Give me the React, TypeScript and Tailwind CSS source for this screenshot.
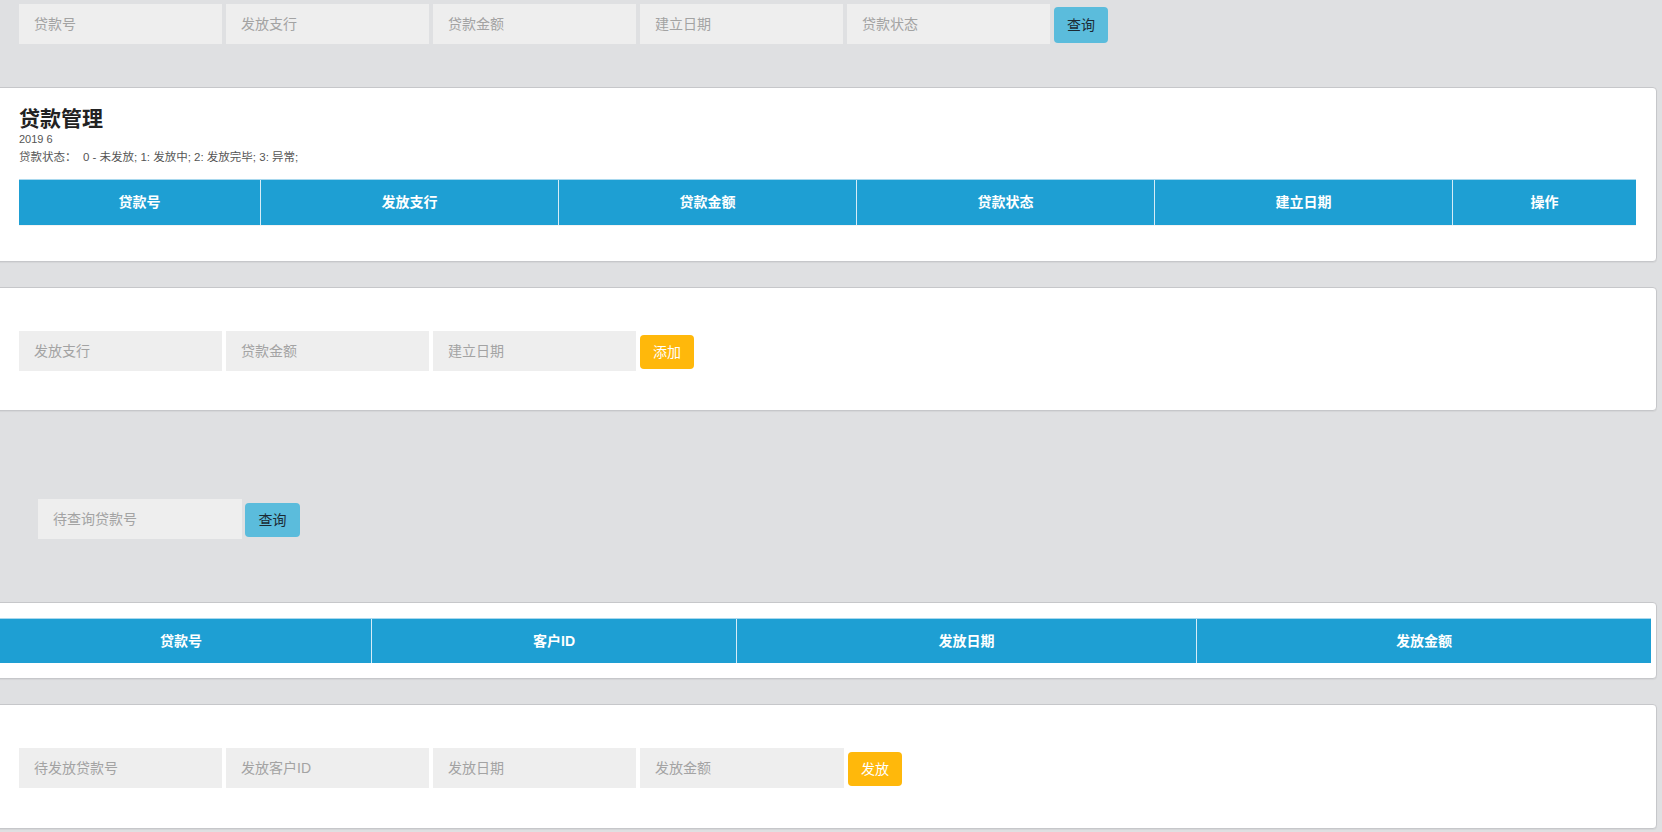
import React from "react";

const inputCls =
  "h-[40px] w-[203px] bg-[#eeeeee] px-[15px] text-[14px] text-[#333] placeholder:text-[#a3a3a3] outline-none";

const Field = ({ placeholder }: { placeholder: string }) => (
  <input placeholder={placeholder} className={inputCls} />
);

const loanCols = ["贷款号", "发放支行", "贷款金额", "贷款状态", "建立日期", "操作"];
const payCols = ["贷款号", "客户ID", "发放日期", "发放金额"];

const App = () => {
  return (
    <div className="w-full min-h-screen overflow-hidden bg-[#dfe0e2] pb-[4px] font-['Liberation_Sans','Noto_Sans_CJK_SC',sans-serif]">
      {/* top search */}
      <div className="flex items-start gap-[4px] pl-[19px] pt-[4px]">
        <Field placeholder="贷款号" />
        <Field placeholder="发放支行" />
        <Field placeholder="贷款金额" />
        <Field placeholder="建立日期" />
        <Field placeholder="贷款状态" />
        <button className="mt-[3px] h-[36px] w-[54px] rounded-[4px] bg-[#5bbcdc] text-[14px] text-[#1c2a33]">
          查询
        </button>
      </div>

      {/* loan list */}
      <div className="-ml-[10px] mr-[5px] mt-[43px] rounded-[4px] border border-[#c6c7ca] bg-white pl-[28px] pr-[20px] pt-[18px] pb-[35px] shadow-[0_1px_1px_rgba(0,0,0,0.05)]">
        <h2 className="text-[21px] leading-[26px] font-semibold text-[#222]">贷款管理</h2>
        <div className="text-[11px] leading-[15px] text-[#555]">2019 6</div>
        <div className="mt-[2px] text-[11.5px] leading-[16px] text-[#555]">
          贷款状态：&nbsp;&nbsp;0 - 未发放; 1: 发放中; 2: 发放完毕; 3: 异常;
        </div>
        <div className="mt-[14px] grid h-[46px] grid-cols-[241px_298px_298px_298px_298px_1fr] border-t border-[#a8d8ee] bg-[#1e9fd3]">
          {loanCols.map((c, i) => (
            <div
              key={c}
              className={`flex items-center justify-center text-[14px] font-bold text-white ${
                i > 0 ? "border-l border-[#d5ecf7]" : ""
              }`}
            >
              {c}
            </div>
          ))}
        </div>
        <div className="h-px bg-[#f3f3f3]" />
      </div>

      {/* add loan */}
      <div className="-ml-[10px] mr-[5px] mt-[25px] flex items-start gap-[4px] rounded-[4px] border border-[#c6c7ca] bg-white pl-[28px] pt-[43px] pb-[39px] shadow-[0_1px_1px_rgba(0,0,0,0.05)]">
        <Field placeholder="发放支行" />
        <Field placeholder="贷款金额" />
        <Field placeholder="建立日期" />
        <button className="mt-[4px] h-[34px] w-[54px] rounded-[4px] bg-[#ffb80b] text-[14px] text-white">
          添加
        </button>
      </div>

      {/* query payments */}
      <div className="mt-[88px] flex items-start gap-[3px] pl-[38px]">
        <input placeholder="待查询贷款号" className={inputCls + " w-[204px]"} />
        <button className="mt-[4px] h-[34px] w-[55px] rounded-[4px] bg-[#5bbcdc] text-[14px] text-[#1c2a33]">
          查询
        </button>
      </div>

      {/* payments list */}
      <div className="-ml-[10px] mr-[5px] mt-[63px] rounded-[4px] border border-[#c6c7ca] bg-white pr-[5px] pt-[15px] pb-[15px] shadow-[0_1px_1px_rgba(0,0,0,0.05)]">
        <div className="grid h-[45px] grid-cols-[380px_365px_460px_1fr] border-t border-[#a8d8ee] bg-[#1e9fd3]">
          {payCols.map((c, i) => (
            <div
              key={c}
              className={`flex items-center justify-center text-[14px] font-bold text-white ${
                i > 0 ? "border-l border-[#d5ecf7]" : ""
              }`}
            >
              {c}
            </div>
          ))}
        </div>
      </div>

      {/* make payment */}
      <div className="-ml-[10px] mr-[5px] mt-[25px] flex items-start gap-[4px] rounded-[4px] border border-[#c6c7ca] bg-white pl-[28px] pt-[43px] pb-[40px] shadow-[0_1px_1px_rgba(0,0,0,0.05)]">
        <Field placeholder="待发放贷款号" />
        <Field placeholder="发放客户ID" />
        <Field placeholder="发放日期" />
        <input placeholder="发放金额" className={inputCls + " w-[204px]"} />
        <button className="mt-[4px] h-[34px] w-[54px] rounded-[4px] bg-[#ffb80b] text-[14px] text-white">
          发放
        </button>
      </div>
    </div>
  );
};

export default App;
